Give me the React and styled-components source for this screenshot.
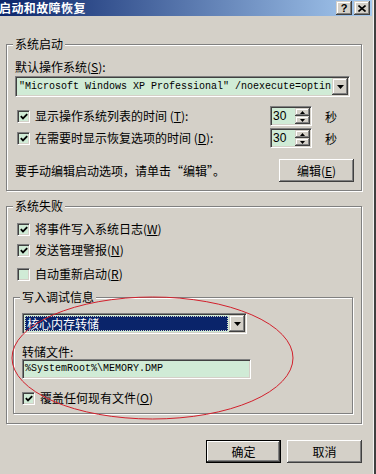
import styled, { createGlobalStyle, css } from "styled-components";

const BG = "#d4d0c8";
const FIELD = "#d0ebd6";

const GlobalStyle = createGlobalStyle`
  html, body { margin: 0; padding: 0; background: ${BG}; }
  body {
    font-family: "Noto Sans CJK SC", "Liberation Sans", sans-serif;
    font-size: 12px;
    color: #000;
  }
`;

const sunken = css`
  box-sizing: border-box;
  border: 1px solid;
  border-color: #808080 #fff #fff #808080;
  box-shadow: inset 1px 1px #404040, inset -1px -1px ${BG};
`;

const raised = css`
  box-sizing: border-box;
  background: ${BG};
  box-shadow: inset -1px -1px #404040, inset 1px 1px ${BG}, inset -2px -2px #808080, inset 2px 2px #fff;
`;

const Window = styled.div`
  position: relative;
  width: 376px;
  height: 474px;
  box-sizing: border-box;
  padding-right: 4px;
  background: ${BG};
  box-shadow: inset -2px 0 #404040, inset -3px 0 #f2f2f2;
  overflow: hidden;
`;

const TitleBar = styled.div`
  height: 16px;
  display: flex;
  align-items: center;
  justify-content: space-between;
  background: linear-gradient(to right, #0a246a, #a6caf0);
`;

const Title = styled.span`
  margin-left: -1px;
  color: #fff;
  font-weight: bold;
  font-size: 12px;
  letter-spacing: 0.4px;
  line-height: 16px;
`;

const CapButtons = styled.div`
  display: flex;
  gap: 2px;
  margin-right: 2px;
`;

const CapButton = styled.div`
  ${raised};
  width: 16px;
  height: 14px;
  display: flex;
  align-items: center;
  justify-content: center;
  font: bold 11px "Liberation Sans", sans-serif;
  line-height: 14px;
`;

const Body = styled.div`
  padding: 22px 10px 0 6px;
  display: flex;
  flex-direction: column;
`;

const Group = styled.fieldset`
  margin: ${(p) => p.$mt || 0}px 0 0;
  padding: 0;
  border: 1px solid #808080;
  box-shadow: inset 1px 1px #fff, 1px 1px #fff;
  min-width: 0;
`;

const Legend = styled.legend`
  margin-left: 6px;
  padding: 0 2px;
  font-size: 12px;
  line-height: 12px;
  background: ${BG};
`;

const GroupBody = styled.div`
  padding: ${(p) => p.$pad};
  display: flex;
  flex-direction: column;
`;

const Label = styled.div`
  height: 14px;
  line-height: 14px;
  margin-top: ${(p) => p.$mt || 0}px;
  white-space: nowrap;
`;

const Combo = styled.div`
  ${sunken};
  height: 21px;
  width: ${(p) => p.$w};
  margin-top: ${(p) => p.$mt || 0}px;
  padding: 1px;
  display: flex;
  background: ${FIELD};
`;

const ComboText = styled.div`
  flex: 1;
  overflow: hidden;
  white-space: nowrap;
  box-sizing: border-box;
  padding-left: 2px;
  ${(p) =>
    p.$mono
      ? css`
          font-family: "Liberation Mono", monospace;
          font-size: 10px;
          line-height: 17px;
        `
      : css`
          line-height: 15px;
          margin: 1px;
          background: #0a246a;
          color: #fff;
          outline: 1px dotted #d4d0c8;
          outline-offset: -1px;
        `}
`;

const DropButton = styled.div`
  ${raised};
  width: 16px;
  height: 17px;
  display: flex;
  align-items: center;
  justify-content: center;
`;

const TextField = styled.div`
  ${sunken};
  width: 229px;
  height: 20px;
  background: ${FIELD};
  padding-left: 2px;
  font-family: "Liberation Mono", monospace;
  font-size: 10px;
  line-height: 18px;
`;

const CheckRow = styled.label`
  display: flex;
  align-items: center;
  gap: 5px;
  height: ${(p) => p.$h || 14}px;
  margin-top: ${(p) => p.$mt || 0}px;
  margin-left: ${(p) => p.$ml || 0}px;
  white-space: nowrap;
`;

const Box = styled.span`
  ${sunken};
  flex: none;
  width: 13px;
  height: 13px;
  background: ${FIELD};
  display: flex;
  align-items: center;
  justify-content: center;
`;

const RowText = styled.span`
  flex: 1;
  line-height: 14px;
`;

const Spinner = styled.div`
  ${sunken};
  width: 42px;
  height: 20px;
  display: flex;
  padding: 1px;
  background: ${FIELD};
`;

const SpinValue = styled.div`
  flex: 1;
  padding-left: 1px;
  font-family: "Liberation Sans", sans-serif;
  font-size: 12px;
  line-height: 16px;
`;

const SpinButtons = styled.div`
  width: 15px;
  display: flex;
  flex-direction: column;
`;

const SpinButton = styled.div`
  ${raised};
  flex: 1;
  display: flex;
  align-items: center;
  justify-content: center;
`;

const Unit = styled.span`
  width: 27px;
  margin-left: 8px;
`;

const EditRow = styled.div`
  display: flex;
  align-items: center;
  justify-content: space-between;
  margin-top: 11px;
  margin-right: -2px;
`;

const PushButton = styled.div`
  box-sizing: border-box;
  width: 75px;
  height: 23px;
  display: flex;
  align-items: center;
  justify-content: center;
  background: ${BG};
  box-shadow: inset -1px -1px #404040, inset 1px 1px #fff, inset -2px -2px #808080;
  ${(p) =>
    p.$default &&
    css`
      border: 1px solid #000;
      box-shadow: inset -1px -1px #404040, inset 1px 1px #fff, inset -2px -2px #808080;
    `}
`;

const ButtonRow = styled.div`
  display: flex;
  justify-content: flex-end;
  gap: 6px;
  margin-top: 16px;
`;

const Overlay = styled.svg`
  position: absolute;
  left: 0;
  top: 0;
  pointer-events: none;
`;

const Check = () => (
  <svg width="8" height="7" viewBox="0 0 8 7">
    <path d="M0.8 3.2 L3 5.4 L7.2 1.2" stroke="#000" strokeWidth="1.8" fill="none" />
  </svg>
);

const Arrow = ({ up, w = 7, h = 4 }) => (
  <svg width={w} height={h} viewBox={`0 0 ${w} ${h}`}>
    <path d={up ? `M0 ${h}H${w}L${w / 2} 0Z` : `M0 0H${w}L${w / 2} ${h}Z`} fill="#000" />
  </svg>
);

const CheckBox = ({ checked, children, ...rest }) => (
  <CheckRow {...rest}>
    <Box>{checked && <Check />}</Box>
    <RowText>{children}</RowText>
  </CheckRow>
);

const TimeRow = ({ children, mt }) => (
  <CheckRow $h={20} $mt={mt} $ml={2}>
    <Box>
      <Check />
    </Box>
    <RowText>{children}</RowText>
    <Spinner>
      <SpinValue>30</SpinValue>
      <SpinButtons>
        <SpinButton>
          <Arrow up w={5} h={3} />
        </SpinButton>
        <SpinButton>
          <Arrow w={5} h={3} />
        </SpinButton>
      </SpinButtons>
    </Spinner>
    <Unit>秒</Unit>
  </CheckRow>
);

const App = () => {
  return (
    <Window>
      <GlobalStyle />
      <TitleBar>
        <Title>启动和故障恢复</Title>
        <CapButtons>
          <CapButton>?</CapButton>
          <CapButton>
            <svg width="8" height="7" viewBox="0 0 8 7">
              <path d="M0.5 0.5 L7.5 6.5 M7.5 0.5 L0.5 6.5" stroke="#000" strokeWidth="1.6" />
            </svg>
          </CapButton>
        </CapButtons>
      </TitleBar>
      <Body>
        <Group>
          <Legend>系统启动</Legend>
          <GroupBody $pad="10px 9px 8px 8px">
            <Label>
              默认操作系统(<u>S</u>):
            </Label>
            <Combo $mt={2} $w="335px">
              <ComboText $mono>"Microsoft Windows XP Professional" /noexecute=optin</ComboText>
              <DropButton>
                <Arrow />
              </DropButton>
            </Combo>
            <TimeRow mt={9}>
              显示操作系统列表的时间 (<u>T</u>):
            </TimeRow>
            <TimeRow mt={2}>
              在需要时显示恢复选项的时间 (<u>D</u>):
            </TimeRow>
            <EditRow>
              <span>要手动编辑启动选项，请单击“编辑”。</span>
              <PushButton>
                编辑(<u>E</u>)
              </PushButton>
            </EditRow>
          </GroupBody>
        </Group>

        <Group $mt={9}>
          <Legend>系统失败</Legend>
          <GroupBody $pad="10px 8px 9px 6px">
            <CheckBox checked $ml={4}>
              将事件写入系统日志(<u>W</u>)
            </CheckBox>
            <CheckBox checked $ml={4} $mt={7}>
              发送管理警报(<u>N</u>)
            </CheckBox>
            <CheckBox $ml={4} $mt={10}>
              自动重新启动(<u>R</u>)
            </CheckBox>
            <Group $mt={10}>
              <Legend>写入调试信息</Legend>
              <GroupBody $pad="10px 8px 8px 8px">
                <Combo $w="225px">
                  <ComboText>核心内存转储</ComboText>
                  <DropButton>
                    <Arrow />
                  </DropButton>
                </Combo>
                <Label $mt={11}>转储文件:</Label>
                <TextField>%SystemRoot%\MEMORY.DMP</TextField>
                <CheckBox checked $mt={12}>
                  覆盖任何现有文件(<u>O</u>)
                </CheckBox>
              </GroupBody>
            </Group>
          </GroupBody>
        </Group>

        <ButtonRow>
          <PushButton $default>确定</PushButton>
          <PushButton>取消</PushButton>
        </ButtonRow>
      </Body>

      <Overlay width="376" height="474" viewBox="0 0 376 474">
        <ellipse cx="152.5" cy="358" rx="140.5" ry="61" fill="none" stroke="#d2202c" strokeWidth="1" />
      </Overlay>
    </Window>
  );
};

export default App;
